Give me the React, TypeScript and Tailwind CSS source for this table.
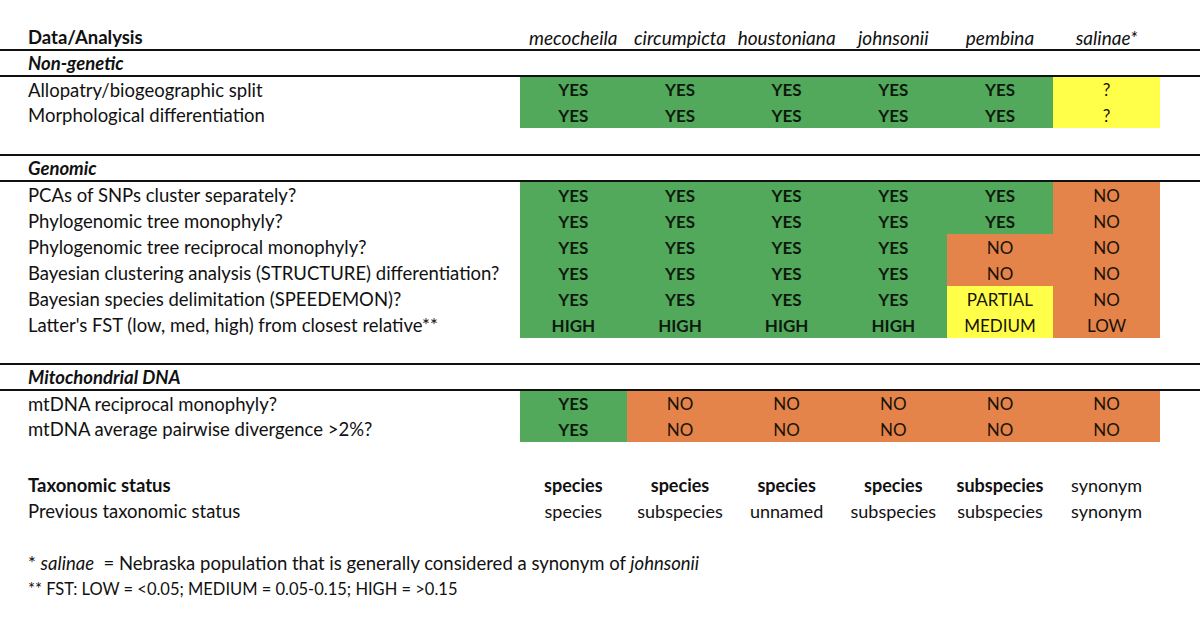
import React from "react";

type Cell = { v: string; c: "g" | "o" | "y" | "n"; b?: boolean };

const bg: Record<string, string> = {
  g: "bg-[#52a95c]",
  o: "bg-[#e4844a]",
  y: "bg-[#ffff4a]",
  n: "",
};

const Y: Cell = { v: "YES", c: "g", b: true };
const N: Cell = { v: "NO", c: "o" };

const cols = ["mecocheila", "circumpicta", "houstoniana", "johnsonii", "pembina", "salinae*"];

function Line() {
  return <div className="h-[2px] w-full bg-[#111]" />;
}

function DataRow({ label, cells, h }: { label: string; cells: Cell[]; h: string }) {
  return (
    <div className={`flex items-center ${h}`}>
      <div className="w-[520px] pl-[28px] h-full flex items-center whitespace-nowrap">{label}</div>
      {cells.map((c, i) => (
        <div
          key={i}
          className={`w-[106.67px] h-full flex items-center justify-center text-[17px] ${bg[c.c]} ${c.b ? "font-bold text-[#0d1a0d]" : "text-[#1a1208]"}`}
        >
          {c.v}
        </div>
      ))}
    </div>
  );
}

function SectionRow({ label }: { label: string }) {
  return (
    <div className="h-[24px] flex items-center pl-[28px] font-bold italic">{label}</div>
  );
}

export default function App() {
  return (
    <div
      className="w-[1200px] h-[633px] bg-white text-[#111] text-[18.5px] leading-none overflow-hidden"
      style={{ fontFamily: "Lato, 'Open Sans', sans-serif" }}
    >
      <div className="pt-[25px]">
        {/* header */}
        <div className="flex items-center h-[24px]">
          <div className="w-[520px] pl-[28px] font-bold">Data/Analysis</div>
          {cols.map((c) => (
            <div key={c} className="w-[106.67px] text-center italic text-[19px]">
              {c}
            </div>
          ))}
        </div>
        <Line />
        <SectionRow label="Non-genetic" />
        <Line />
        <DataRow label="Allopatry/biogeographic split" h="h-[25.5px]" cells={[Y, Y, Y, Y, Y, { v: "?", c: "y" }]} />
        <DataRow label="Morphological differentiation" h="h-[25.5px]" cells={[Y, Y, Y, Y, Y, { v: "?", c: "y" }]} />
        <div className="h-[26px]" />
        <Line />
        <SectionRow label="Genomic" />
        <Line />
        <DataRow label="PCAs of SNPs cluster separately?" h="h-[26px]" cells={[Y, Y, Y, Y, Y, N]} />
        <DataRow label="Phylogenomic tree monophyly?" h="h-[26px]" cells={[Y, Y, Y, Y, Y, N]} />
        <DataRow label="Phylogenomic tree reciprocal monophyly?" h="h-[26px]" cells={[Y, Y, Y, Y, N, N]} />
        <DataRow
          label="Bayesian clustering analysis (STRUCTURE) differentiation?"
          h="h-[26px]"
          cells={[Y, Y, Y, Y, N, N]}
        />
        <DataRow
          label="Bayesian species delimitation (SPEEDEMON)?"
          h="h-[26px]"
          cells={[Y, Y, Y, Y, { v: "PARTIAL", c: "y" }, N]}
        />
        <DataRow
          label="Latter's FST (low, med, high) from closest relative**"
          h="h-[26px]"
          cells={[
            { v: "HIGH", c: "g", b: true },
            { v: "HIGH", c: "g", b: true },
            { v: "HIGH", c: "g", b: true },
            { v: "HIGH", c: "g", b: true },
            { v: "MEDIUM", c: "y" },
            { v: "LOW", c: "o" },
          ]}
        />
        <div className="h-[25px]" />
        <Line />
        <SectionRow label="Mitochondrial DNA" />
        <Line />
        <DataRow label="mtDNA reciprocal monophyly?" h="h-[25.5px]" cells={[Y, N, N, N, N, N]} />
        <DataRow label="mtDNA average pairwise divergence >2%?" h="h-[25.5px]" cells={[Y, N, N, N, N, N]} />
        <div className="h-[30px]" />
        <div className="flex items-center h-[26px]">
          <div className="w-[520px] pl-[28px] font-bold">Taxonomic status</div>
          {["species", "species", "species", "species", "subspecies"].map((s, i) => (
            <div key={i} className="w-[106.67px] text-center font-bold text-[18px]">
              {s}
            </div>
          ))}
          <div className="w-[106.67px] text-center text-[18px]">synonym</div>
        </div>
        <div className="flex items-center h-[26px]">
          <div className="w-[520px] pl-[28px]">Previous taxonomic status</div>
          {["species", "subspecies", "unnamed", "subspecies", "subspecies", "synonym"].map((s, i) => (
            <div key={i} className="w-[106.67px] text-center text-[18px]">
              {s}
            </div>
          ))}
        </div>
        <div className="h-[26px]" />
        <div className="h-[26px] flex items-center pl-[28px] text-[18.5px]">
          *&nbsp;<span className="italic">salinae</span>&nbsp; = Nebraska population that is generally considered a
          synonym of&nbsp;<span className="italic">johnsonii</span>
        </div>
        <div className="h-[26px] flex items-center pl-[28px] text-[16.5px]">
          ** FST: LOW = &lt;0.05; MEDIUM = 0.05-0.15; HIGH = &gt;0.15
        </div>
      </div>
    </div>
  );
}
